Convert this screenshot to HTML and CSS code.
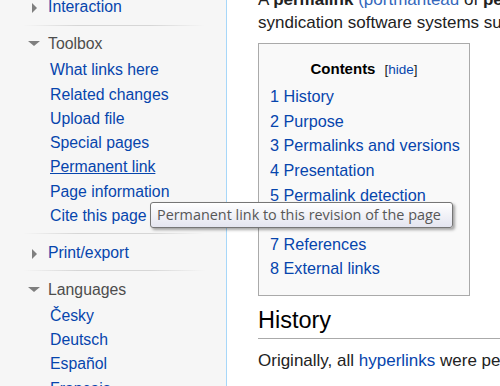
FILE: index.html
```html
<!DOCTYPE html>
<html>
<head>
<meta charset="utf-8">
<link rel="stylesheet" href="styles.css">
</head>
<body>
<div class="page">
  <nav class="sidebar">
    <div class="portal first">
      <h3 class="heading link"><span class="arrow"><svg width="25" height="24" viewBox="0 0 25 24"><polygon points="9,8 14,13 9,18" fill="#7f7f7f"/></svg></span>Interaction</h3>
    </div>
    <div class="portal">
      <h3 class="heading"><span class="arrow"><svg width="25" height="24" viewBox="0 0 25 24"><polygon points="5,9 17,9 11,14" fill="#7f7f7f"/></svg></span>Toolbox</h3>
      <ul class="links">
        <li><a href="#">What links here</a></li>
        <li><a href="#">Related changes</a></li>
        <li><a href="#">Upload file</a></li>
        <li><a href="#">Special pages</a></li>
        <li><a href="#" class="hover">Permanent link</a></li>
        <li><a href="#">Page information</a></li>
        <li><a href="#">Cite this page</a></li>
      </ul>
    </div>
    <div class="portal">
      <h3 class="heading link"><span class="arrow"><svg width="25" height="24" viewBox="0 0 25 24"><polygon points="9,8 14,13 9,18" fill="#7f7f7f"/></svg></span>Print/export</h3>
    </div>
    <div class="portal">
      <h3 class="heading"><span class="arrow"><svg width="25" height="24" viewBox="0 0 25 24"><polygon points="5,9 17,9 11,14" fill="#7f7f7f"/></svg></span>Languages</h3>
      <ul class="links">
        <li><a href="#">Česky</a></li>
        <li><a href="#">Deutsch</a></li>
        <li><a href="#">Español</a></li>
        <li><a href="#">Français</a></li>
      </ul>
    </div>
  </nav>
  <main class="content">
    <p class="intro">A <b>permalink</b> <a href="#" class="ext">(portmanteau</a> of <b>permanent link</b>) is a URL that points<br>syndication software systems support such links.</p>
    <div class="toc">
      <div class="toc-title"><b>Contents</b><span class="toc-hide">[<a href="#">hide</a>]</span></div>
      <ul>
        <li><a href="#">1 History</a></li>
        <li><a href="#">2 Purpose</a></li>
        <li><a href="#">3 Permalinks and versions</a></li>
        <li><a href="#">4 Presentation</a></li>
        <li><a href="#">5 Permalink detection</a></li>
        <li><a href="#">6 See also</a></li>
        <li><a href="#">7 References</a></li>
        <li><a href="#">8 External links</a></li>
      </ul>
    </div>
    <h2 class="section">History</h2>
    <p class="para">Originally, all <a href="#">hyperlinks</a> were permanent links.</p>
  </main>
  <div class="tooltip">Permanent link to this revision of the page</div>
</div>
</body>
</html>
```
FILE: styles.css
```css
body {
  margin: 0;
  width: 500px;
  height: 386px;
  overflow: hidden;
  font-family: "Liberation Sans", Arial, sans-serif;
  background: #fff;
}
.page {
  display: flex;
  height: 386px;
  position: relative;
}
.sidebar {
  width: 226px;
  flex: none;
  background: #f6f6f6;
  border-right: 1px solid #a7d7f9;
  font-size: 15.8px;
}
.portal {
  margin-left: 23px;
  width: 182px;
  padding: 7.5px 0 5px;
  background: linear-gradient(to right, rgba(216,216,216,0), #d6d6d6 30%, #d6d6d6 70%, rgba(216,216,216,0)) no-repeat left top / 100% 1px;
}
.portal.first {
  background: none;
  margin-top: -5px;
  padding-top: 0;
  padding-bottom: 5.5px;
}
.heading {
  display: flex;
  margin: 0;
  font-size: 15.8px;
  font-weight: normal;
  line-height: 24.3px;
  color: #4d4d4d;
}
.heading.link { color: #0645ad; }
.arrow {
  width: 25px;
  flex: none;
  height: 24px;
}
.arrow svg { display: block; }
.links {
  list-style: none;
  margin: 1.7px 0 0;
  padding: 0 0 0 27px;
}
.links li { line-height: 24.3px; }
a { color: #0645ad; text-decoration: none; }
a.hover { text-decoration: underline; }
.content {
  flex: 1;
  min-width: 0;
  overflow: hidden;
  padding-left: 31px;
  font-size: 17px;
  color: #222;
}
.intro {
  margin: -12.3px 0 9px;
  line-height: 23px;
  white-space: nowrap;
}
.intro .ext { color: #3366bb; }
.toc {
  width: 212px;
  box-sizing: border-box;
  border: 1px solid #aaa;
  background: #f9f9f9;
  padding: 13px 11px 14px;
  font-size: 16.2px;
}
.toc-title {
  display: flex;
  justify-content: center;
  align-items: baseline;
  height: 24.6px;
  line-height: 24.6px;
  margin-bottom: 3px;
}
.toc-title b { font-size: 15px; color: #000; }
.toc-hide { font-size: 13.5px; margin-left: 9px; }
.toc ul { list-style: none; margin: 0; padding: 0; }
.toc li { line-height: 24.6px; white-space: nowrap; }
.section {
  margin: 11.4px 0 0;
  font-size: 23.5px;
  font-weight: normal;
  line-height: 27px;
  padding-bottom: 3.5px;
  border-bottom: 1px solid #aaa;
  color: #000;
}
.para {
  margin: 9.7px 0 0;
  line-height: 23px;
  white-space: nowrap;
}
.tooltip {
  position: absolute;
  left: 150px;
  top: 202px;
  width: 303px;
  height: 26px;
  box-sizing: border-box;
  border: 1px solid #767676;
  border-radius: 3px;
  background: linear-gradient(#ffffff, #e4e5f0);
  box-shadow: 2px 2px 3px rgba(0,0,0,0.35);
  font-family: "Open Sans", "Noto Sans", sans-serif;
  font-size: 14.4px;
  line-height: 23px;
  padding-left: 6px;
  color: #575757;
  white-space: nowrap;
}
```
